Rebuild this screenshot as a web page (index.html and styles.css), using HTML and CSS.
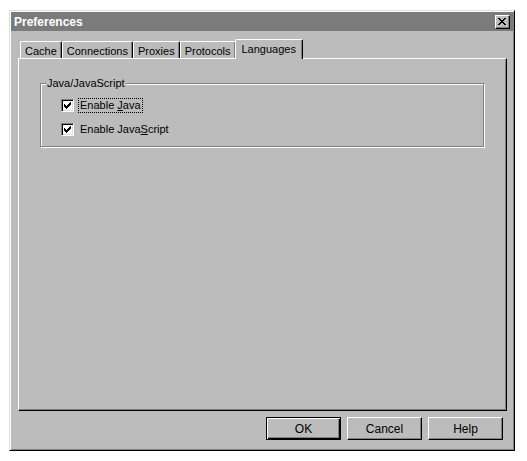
FILE: index.html
```html
<!DOCTYPE html>
<html>
<head>
<meta charset="utf-8">
<link rel="stylesheet" href="styles.css">
</head>
<body>
<div class="window">
  <div class="titlebar">
    <span class="title">Preferences</span>
    <span class="close">
      <svg width="8" height="7" viewBox="0 0 8 7" shape-rendering="crispEdges"><path d="M0 0h2v1H0zM6 0h2v1H6zM1 1h2v1H1zM5 1h2v1H5zM2 2h4v1H2zM3 3h2v1H3zM2 4h4v1H2zM1 5h2v1H1zM5 5h2v1H5zM0 6h2v1H0zM6 6h2v1H6z" fill="#000"/></svg>
    </span>
  </div>
  <div class="body">
    <div class="tabs">
      <span class="tab">Cache</span>
      <span class="tab">Connections</span>
      <span class="tab">Proxies</span>
      <span class="tab">Protocols</span>
      <span class="tab active">Languages</span>
    </div>
    <div class="panel">
      <fieldset class="group">
        <legend>Java/JavaScript</legend>
        <div class="rows">
          <div class="row">
            <span class="check"><svg width="7" height="7" viewBox="0 0 7 7" shape-rendering="crispEdges"><path d="M0 2h1v3H0zM1 3h1v3H1zM2 4h1v3H2zM3 3h1v3H3zM4 2h1v3H4zM5 1h1v3H5zM6 0h1v3H6z" fill="#000"/></svg></span>
            <span class="label focus">Enable <u>J</u>ava</span>
          </div>
          <div class="row">
            <span class="check"><svg width="7" height="7" viewBox="0 0 7 7" shape-rendering="crispEdges"><path d="M0 2h1v3H0zM1 3h1v3H1zM2 4h1v3H2zM3 3h1v3H3zM4 2h1v3H4zM5 1h1v3H5zM6 0h1v3H6z" fill="#000"/></svg></span>
            <span class="label">Enable Java<u>S</u>cript</span>
          </div>
        </div>
      </fieldset>
    </div>
    <div class="buttons">
      <span class="btn default">OK</span>
      <span class="btn">Cancel</span>
      <span class="btn">Help</span>
    </div>
  </div>
</div>
</body>
</html>
```

FILE: styles.css
```css
* { box-sizing: border-box; }
html, body { margin: 0; padding: 0; background: #fff; }
body {
  font-family: "Liberation Sans", Arial, sans-serif;
  font-size: 11px;
  color: #000;
}
.window {
  margin: 10px 0 0 9px;
  width: 506px;
  height: 441px;
  background: #bcbcbc;
  border: 1px solid;
  border-color: #dfdfdf #000 #000 #dfdfdf;
  box-shadow: inset 1px 1px 0 #fff, inset -1px -1px 0 #808080;
  padding: 1px;
  display: flex;
  flex-direction: column;
}
.titlebar {
  height: 19px;
  background: #7b7b7b;
  display: flex;
  align-items: center;
  justify-content: space-between;
  padding: 0 3px 0 3px;
}
.title {
  color: #fff;
  font-weight: bold;
  font-size: 12px;
}
.close {
  width: 15px;
  height: 14px;
  background: #bcbcbc;
  border: 1px solid;
  border-color: #fff #000 #000 #fff;
  box-shadow: inset -1px -1px 0 #808080;
  display: flex;
  align-items: center;
  justify-content: center;
  padding: 0 1px 1px 0;
}
.close svg { display: block; }
.body {
  flex: 1;
  display: flex;
  flex-direction: column;
  padding: 8px 6px 9px 7px;
}
.tabs {
  height: 19px;
  display: flex;
  align-items: flex-end;
  padding-left: 2px;
}
.tab {
  height: 17px;
  padding: 0 4px;
  display: flex;
  align-items: center;
  border-top: 1px solid #fff;
  border-left: 1px solid #fff;
  border-right: 1px solid #000;
  border-radius: 2px 2px 0 0;
  box-shadow: inset -1px 0 0 #808080;
  white-space: nowrap;
  padding-top: 1px;
}
.tab.active {
  height: 20px;
  margin: 0 -2px -1px -1px;
  padding: 0 6px 2px 6px;
  background: #bcbcbc;
  position: relative;
  z-index: 1;
}
.panel {
  flex: 1;
  border: 1px solid;
  border-color: #fff #000 #000 #fff;
  box-shadow: inset -1px -1px 0 #808080;
  padding: 18px 22px 0 21px;
}
.group {
  margin: 0;
  padding: 0;
  border: 1px solid #808080;
  box-shadow: 1px 1px 0 #fff, inset 1px 1px 0 #fff;
  min-width: 0;
}
.group legend {
  padding: 0 1px;
  margin-left: 5px;
  line-height: 13px;
  background: #bcbcbc;
}
.rows {
  padding: 5px 0 7px 20px;
  display: flex;
  flex-direction: column;
  gap: 4px;
}
.row {
  height: 20px;
  display: flex;
  align-items: center;
}
.check {
  width: 13px;
  height: 13px;
  background: #fff;
  border: 1px solid;
  border-color: #808080 #fff #fff #808080;
  box-shadow: inset 1px 1px 0 #000, inset -1px -1px 0 #dfdfdf;
  padding: 2px 0 0 2px;
  display: flex;
}
.check svg { display: block; }
.label {
  margin-left: 4px;
  padding: 0 1px;
  border: 1px solid transparent;
  line-height: 13px;
}
.label.focus { border: 1px dotted #000; }
.buttons {
  margin-top: 6px;
  display: flex;
  justify-content: flex-end;
  gap: 6px;
  padding-right: 4px;
}
.btn {
  width: 75px;
  height: 23px;
  display: flex;
  align-items: center;
  justify-content: center;
  border: 1px solid;
  border-color: #fff #000 #000 #fff;
  box-shadow: inset -1px -1px 0 #808080;
  font-size: 12px;
}
.btn.default {
  border-color: #000;
  box-shadow: inset 1px 1px 0 #fff, inset -1px -1px 0 #000, inset -2px -2px 0 #808080;
}
```
